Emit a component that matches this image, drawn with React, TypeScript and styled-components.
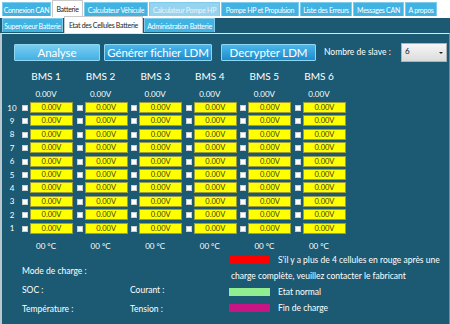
import React from 'react';
import styled, { createGlobalStyle } from 'styled-components';

const TEAL = '#1b5a72';
const TAB_BLUE = '#41b3e3';

const GlobalStyle = createGlobalStyle`
  html, body {
    margin: 0;
    padding: 0;
    background: #fff;
  }
  body {
    font-family: Lato, "Open Sans", "Liberation Sans", sans-serif;
  }
`;

const Window = styled.div`
  width: 450px;
  height: 324px;
  overflow: hidden;
  display: flex;
  flex-direction: column;
  background: #fff;
`;

const TopTabs = styled.div`
  display: flex;
  align-items: flex-end;
  height: 17px;
  padding-left: 2px;
`;

const Tab = styled.div<{ $w: number; $active?: boolean; $faded?: boolean }>`
  width: ${p => p.$w}px;
  box-sizing: border-box;
  height: ${p => (p.$active ? 17 : 14)}px;
  margin-bottom: ${p => (p.$active ? 0 : 1)}px;
  display: flex;
  align-items: center;
  justify-content: center;
  overflow: hidden;
  font-size: 7px;
  letter-spacing: -0.3px;
  white-space: nowrap;
  color: ${p => (p.$active ? '#222' : p.$faded ? '#e6f5fc' : '#fff')};
  background: ${p => (p.$active ? '#fff' : p.$faded ? '#96d3ee' : TAB_BLUE)};
  border: 1px solid ${p => (p.$active ? '#c9c9c9' : '#7fcbec')};
  border-bottom: none;
  & + & {
    margin-left: 1px;
  }
`;

const SubTabs = styled.div`
  display: flex;
  align-items: flex-end;
  height: 15px;
  margin-top: 1px;
  padding-left: 2px;
  background: ${TEAL};
`;

const Panel = styled.div`
  flex: 1;
  background: ${TEAL};
  border-top: 1px solid #dfe7ea;
  border-left: 2px solid #b9c9cf;
  border-right: 1px solid #6d8f9c;
  display: flex;
  flex-direction: column;
`;

const Toolbar = styled.div`
  display: flex;
  align-items: center;
  height: 20px;
  margin-top: 8px;
  padding-left: 12px;
`;

const ActionButton = styled.button<{ $w: number; $light?: boolean; $gap?: number }>`
  width: ${p => p.$w}px;
  height: 17px;
  margin-left: ${p => p.$gap ?? 0}px;
  padding: 0;
  font-family: inherit;
  font-size: 11.5px;
  letter-spacing: -0.1px;
  white-space: nowrap;
  color: #fff;
  border: 1px solid #8fd6f3;
  border-radius: 1px;
  background: ${p =>
    p.$light
      ? 'linear-gradient(#79cdf1, #44b0e4)'
      : 'linear-gradient(#4cb6ea, #1d8ccd)'};
  display: flex;
  align-items: center;
  justify-content: center;
`;

const SlaveLabel = styled.span`
  margin-left: 8px;
  font-size: 8.5px;
  color: #fff;
  width: 77px;
  white-space: nowrap;
`;

const Select = styled.div`
  width: 46px;
  height: 19px;
  box-sizing: border-box;
  border: 1px solid #a9b5bb;
  background: linear-gradient(#f6f6f6, #dcdcdc);
  font-size: 8px;
  color: #111;
  padding: 2px 0 0 3px;
  position: relative;
`;

const Caret = styled.span`
  position: absolute;
  right: 3px;
  top: 8px;
  width: 0;
  height: 0;
  border-left: 2px solid transparent;
  border-right: 2px solid transparent;
  border-top: 2px solid #222;
`;

const Grid = styled.div`
  display: grid;
  grid-template-columns: 20px repeat(6, 54.6px);
  grid-template-rows: 18px 17px repeat(10, 13.4px) 20px;
  margin-top: 5px;
  color: #fff;
`;

const HeadCell = styled.div<{ $size: number }>`
  width: 48px;
  display: flex;
  align-items: center;
  justify-content: center;
  font-size: ${p => p.$size}px;
  white-space: nowrap;
`;

const RowLabel = styled.div`
  display: flex;
  align-items: center;
  justify-content: center;
  font-size: 8px;
  padding-bottom: 2px;
`;

const Cell = styled.div`
  display: flex;
  align-items: flex-start;
  gap: 2px;
`;

const Check = styled.span`
  width: 6px;
  height: 6px;
  margin-top: 3px;
  background: #fff;
  border: 1px solid #c8d0d4;
  box-sizing: border-box;
`;

const Volt = styled.div`
  width: 43px;
  height: 11px;
  box-sizing: border-box;
  background: #ffff00;
  border: 1px solid #9c9c3a;
  color: #3a3a1a;
  font-size: 7.5px;
  display: flex;
  align-items: center;
  justify-content: center;
`;

const Bottom = styled.div`
  display: flex;
  margin-top: -4px;
`;

const Status = styled.div`
  width: 207px;
  padding-left: 20px;
  padding-top: 10px;
  display: grid;
  grid-template-columns: 108px auto;
  grid-auto-rows: 19px;
  align-items: center;
  color: #fff;
  font-size: 8.5px;
`;

const Wide = styled.div`
  grid-column: 1 / span 2;
`;

const Legend = styled.div`
  display: flex;
  flex-direction: column;
  color: #fff;
  font-size: 8.5px;
  white-space: nowrap;
`;

const LegendRow = styled.div`
  display: flex;
  align-items: center;
  height: 16px;
`;

const Swatch = styled.span<{ $color: string }>`
  width: 41px;
  height: 8px;
  margin-right: 8px;
  background: ${p => p.$color};
`;

const LegendNote = styled.div`
  height: 16px;
  display: flex;
  align-items: center;
  padding-left: 2px;
`;

const topTabs: [string, number][] = [
  ['Connexion CAN', 49],
  ['Batterie', 31],
  ['Calculateur Véhicule', 64],
  ['Calculateur Pompe HP', 71],
  ['Pompe HP et Propulsion', 78],
  ['Liste des Erreurs', 52],
  ['Messages CAN', 51],
  ['A propos', 32],
];

const subTabs: [string, number][] = [
  ['Superviseur Batterie', 61],
  ['Etat des Cellules Batterie', 79],
  ['Administration Batterie', 71],
];
const bms = [1, 2, 3, 4, 5, 6];
const rows = [10, 9, 8, 7, 6, 5, 4, 3, 2, 1];

export default function App() {
  return (
    <Window>
      <GlobalStyle />
      <TopTabs>
        {topTabs.map(([t, w]) => (
          <Tab key={t} $w={w} $active={t === 'Batterie'} $faded={t === 'Calculateur Pompe HP'}>
            {t}
          </Tab>
        ))}
      </TopTabs>
      <SubTabs>
        {subTabs.map(([t, w]) => (
          <Tab key={t} $w={w} $active={t === 'Etat des Cellules Batterie'}>
            {t}
          </Tab>
        ))}
      </SubTabs>
      <Panel>
        <Toolbar>
          <ActionButton $w={86} $light>Analyse</ActionButton>
          <ActionButton $w={108} $gap={4}>Générer fichier LDM</ActionButton>
          <ActionButton $w={95} $gap={9}>Decrypter LDM</ActionButton>
          <SlaveLabel>Nombre de slave :</SlaveLabel>
          <Select>
            6
            <Caret />
          </Select>
        </Toolbar>
        <Grid>
          <span />
          {bms.map(b => (
            <HeadCell key={'h' + b} $size={10}>BMS {b}</HeadCell>
          ))}
          <span />
          {bms.map(b => (
            <HeadCell key={'t' + b} $size={8}>0.00V</HeadCell>
          ))}
          {rows.map(r => (
            <React.Fragment key={r}>
              <RowLabel>{r}</RowLabel>
              {bms.map(b => (
                <Cell key={b}>
                  <Check />
                  <Volt>0.00V</Volt>
                </Cell>
              ))}
            </React.Fragment>
          ))}
          <span />
          {bms.map(b => (
            <HeadCell key={'c' + b} $size={8}>00 °C</HeadCell>
          ))}
        </Grid>
        <Bottom>
          <Status>
            <Wide>Mode de charge :</Wide>
            <span>SOC :</span>
            <span>Courant :</span>
            <span>Température :</span>
            <span>Tension :</span>
          </Status>
          <Legend>
            <LegendRow>
              <Swatch $color="#ff0000" />
              S'il y a plus de 4 cellules en rouge après une
            </LegendRow>
            <LegendNote>charge complète, veuillez contacter le fabricant</LegendNote>
            <LegendRow>
              <Swatch $color="#90ee90" />
              Etat normal
            </LegendRow>
            <LegendRow>
              <Swatch $color="#c71585" />
              Fin de charge
            </LegendRow>
          </Legend>
        </Bottom>
      </Panel>
    </Window>
  );
}
